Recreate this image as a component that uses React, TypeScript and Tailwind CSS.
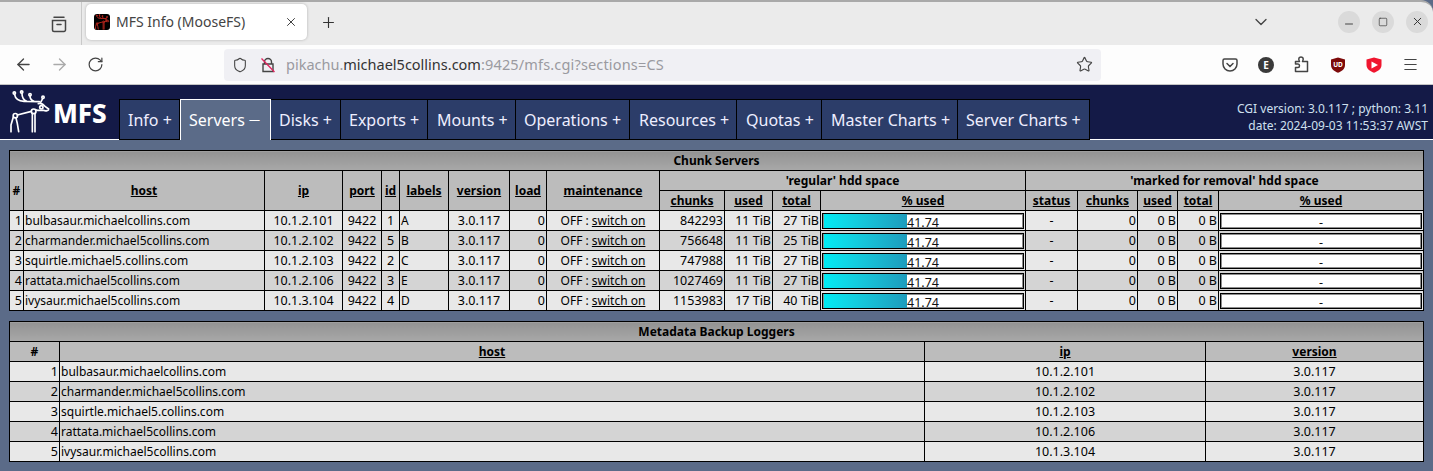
import React from "react";
import { ArrowLeft, ArrowRight, RotateCw, Shield, Star, Menu, X, Plus, ChevronDown, Minus, Square } from "lucide-react";

const tabs = [
  { label: "Info +", cls: "w-[61px] border-l pl-[8px]" },
  { label: "Servers", dash: true, cls: "w-[91px] pl-[8px]", active: true },
  { label: "Disks +", cls: "w-[70px] pl-[8px]" },
  { label: "Exports +", cls: "w-[87px] pl-[8px]" },
  { label: "Mounts +", cls: "w-[88px] pl-[9px]" },
  { label: "Operations +", cls: "w-[114px] pl-[8px]" },
  { label: "Resources +", cls: "w-[107px] pl-[9px]" },
  { label: "Quotas +", cls: "w-[85px] pl-[9px]" },
  { label: "Master Charts +", cls: "w-[136px] pl-[9px]" },
  { label: "Server Charts +", cls: "w-[132px] pl-[8px]" },
];

const servers = [
  ["bulbasaur.michaelcollins.com", "10.1.2.101", "1", "A", "842293", "11 TiB", "27 TiB"],
  ["charmander.michael5collins.com", "10.1.2.102", "5", "B", "756648", "11 TiB", "25 TiB"],
  ["squirtle.michael5.collins.com", "10.1.2.103", "2", "C", "747988", "11 TiB", "27 TiB"],
  ["rattata.michael5collins.com", "10.1.2.106", "3", "E", "1027469", "11 TiB", "27 TiB"],
  ["ivysaur.michael5collins.com", "10.1.3.104", "4", "D", "1153983", "17 TiB", "40 TiB"],
];

const th = "border border-black font-bold text-center p-0 bg-[#bcbcbc] h-[20px] leading-[19px] text-[12px]";
const td = "border border-black p-0 h-[20px] leading-[19px] font-normal";
const txt = "text-[12px]";
const cap = "border border-black font-bold text-center p-0 h-[20px] leading-[19px] text-[12px] bg-gradient-to-b from-[#939393] to-[#a8a8a8]";

function Link({ children }: { children: React.ReactNode }) {
  return <span className="underline">{children}</span>;
}

function Bar({ value, fill }: { value: string; fill?: boolean }) {
  return (
    <div className="relative mx-[1px] mt-[1px] h-[16px] border border-black bg-white shadow-[inset_0_0_0_1px_rgba(0,0,0,0.45)]">
      {fill && <div className="ml-[1px] h-full w-[41.74%] bg-gradient-to-r from-[#00ecf4] to-[#1d9cbd]" />}
      <div className="absolute inset-0 text-center text-[12.5px] leading-[17px] text-[#111]">{value}</div>
    </div>
  );
}

function Moose({ color = "white", width = 5 }: { color?: string; width?: number }) {
  return (
    <g fill="none" stroke={color} strokeWidth={width} strokeLinecap="round" strokeLinejoin="round">
      <path d="M44 25 C46 38 56 44 72 45 L118 46 M66 22 C66 32 70 40 80 45 M90 29 C90 36 94 42 102 45 M128 37 L122 48" />
      <circle cx="43" cy="20" r="3.5" />
      <circle cx="65" cy="17" r="3.5" />
      <circle cx="90" cy="25" r="3.5" />
      <circle cx="129" cy="33" r="3.5" />
      <path d="M115 52 C122 50 130 54 135 60 L146 68 C147 73 138 75 130 72 L112 72 L107 70" />
      <circle cx="124" cy="63" r="5" />
      <circle cx="101" cy="75" r="7" />
      <circle cx="46" cy="88" r="6.5" />
      <path d="M52 86 L94 75 M40 92 L33 116 L33 136 M48 95 L52 112 L56 136 M97 82 L97 136 M105 82 L105 136" />
    </g>
  );
}

export default function App() {
  return (
    <div className="h-[471px] w-[1433px] overflow-hidden bg-[#5b6b88] font-['Noto_Sans',sans-serif] text-[12.5px] text-black">
      {/* tab strip */}
      <div className="relative flex h-[45px] items-center rounded-tr-[12px] border-t-2 border-[#a9a9a9] bg-[#ebebeb] text-[#444]">
        <div className="ml-[50px] flex w-[31px] items-center">
          <svg width="18" height="18" viewBox="0 0 18 18" fill="none" stroke="#444" strokeWidth="1.5">
            <path d="M4 2.2h10M2.5 5.5h13v9.5a1.5 1.5 0 0 1-1.5 1.5H4A1.5 1.5 0 0 1 2.5 15zM7 9.5h4" strokeLinecap="round" />
          </svg>
        </div>
        <div className="h-[43px] w-px bg-[#c9c9c9]" />
        <div className="ml-[4px] mt-[-4px] flex h-[36px] w-[221px] items-center rounded-[5px] bg-white pl-[8px] pr-[9px] shadow-[0_0_3px_rgba(0,0,0,0.25)]">
          <svg width="16" height="16" viewBox="25 8 125 135" className="shrink-0 rounded-[3px] bg-black">
            <Moose color="#b5261e" width={8} />
          </svg>
          <span className="ml-[6px] flex-1 pt-[1px] text-[14px] leading-none text-[#444]">MFS Info (MooseFS)</span>
          <X size={14} strokeWidth={1.6} className="text-[#333]" />
        </div>
        <Plus size={17} strokeWidth={1.6} className="ml-[13px] mt-[-2px] text-[#333]" />
        <div className="flex-1" />
        <ChevronDown size={20} strokeWidth={1.6} className="mr-[67px] mt-[-4px] text-[#444]" />
        <div className="mr-[5px] mt-[-4px] flex items-center gap-[12px]">
          <div className="flex h-[22px] w-[22px] items-center justify-center rounded-full bg-[#dadada]">
            <Minus size={12} strokeWidth={1.8} className="mt-[5px] text-[#333]" />
          </div>
          <div className="flex h-[22px] w-[22px] items-center justify-center rounded-full bg-[#dadada]">
            <Square size={10} strokeWidth={1.6} className="text-[#333]" />
          </div>
          <div className="flex h-[22px] w-[22px] items-center justify-center rounded-full bg-[#dadada]">
            <X size={13} strokeWidth={1.8} className="text-[#333]" />
          </div>
        </div>
      </div>

      {/* toolbar */}
      <div className="flex h-[40px] items-center border-b border-[#c5c5c5] bg-[#fdfdfd] text-[#444]">
        <ArrowLeft size={19} strokeWidth={1.7} className="ml-[14px]" />
        <ArrowRight size={19} strokeWidth={1.7} className="ml-[17px] text-[#aaa]" />
        <RotateCw size={17} strokeWidth={1.7} className="ml-[18px]" />
        <div className="ml-[120px] flex h-[32px] w-[877px] items-center rounded-[4px] bg-[#f0f0f4] pl-[8px] pr-[8px]">
          <Shield size={16} strokeWidth={1.6} />
          <svg width="16" height="16" viewBox="0 0 16 16" fill="none" className="ml-[12px]">
            <path d="M4.5 7V5a3.5 3.5 0 0 1 7 0v2M3 7h10v7.5H3z" stroke="#444" strokeWidth="1.4" />
            <path d="M1.5 1.5 L14.5 15" stroke="#e0245e" strokeWidth="1.3" />
          </svg>
          <span className="ml-[10px] flex-1 text-[14.5px] leading-none text-[#9a9aa0]">
            pikachu.<span className="text-[#333]">michael5collins.com</span>
            <span className="tracking-[0.16px]">:9425/mfs.cgi?sections=CS</span>
          </span>
          <Star size={17} strokeWidth={1.6} />
        </div>
        <div className="ml-[121px] flex h-[16px] w-[16px] items-center justify-center">
          <svg width="16" height="16" viewBox="0 0 16 16" fill="none" stroke="#444" strokeWidth="1.5">
            <path d="M2.5 2h11A1.5 1.5 0 0 1 15 3.5V7a7 7 0 0 1-14 0V3.5A1.5 1.5 0 0 1 2.5 2z" />
            <path d="M5 6.5 L8 9.5 L11 6.5" strokeLinecap="round" />
          </svg>
        </div>
        <div className="ml-[20px] flex h-[16px] w-[16px] items-center justify-center rounded-full bg-[#3a3a3a] text-[10px] font-bold leading-none text-white">E</div>
        <svg width="16" height="17" viewBox="0 0 16 17" fill="none" stroke="#444" strokeWidth="1.5" strokeLinejoin="round" className="ml-[20px]">
          <path d="M1.5 15.5 V11.5 H4 C6 11.5 6 8 4 8 H1.5 V5.5 H5.5 C4 2.5 5 1 7 1 C9 1 10 2.5 8.5 5.5 H13.5 V15.5 Z" />
        </svg>
        <svg width="16" height="16" viewBox="0 0 16 16" className="ml-[20px]">
          <path d="M8 .5 L15 2.5 V8 C15 12 11.5 14.5 8 15.7 C4.5 14.5 1 12 1 8 V2.5 Z" fill="#7d0a0a" />
          <text x="8" y="10" fontSize="6.5" fontWeight="700" fill="#fff" textAnchor="middle">UD</text>
        </svg>
        <svg width="16" height="16" viewBox="0 0 16 16" className="ml-[20px]">
          <path d="M8 .5 L15.5 2.5 V8 C15.5 12 11.5 14.5 8 15.7 C4.5 14.5 .5 12 .5 8 V2.5 Z" fill="#f0162f" />
          <path d="M5.5 4.5 L12 8 L5.5 11.5 Z" fill="#fff" />
        </svg>
        <Menu size={17} strokeWidth={1.6} className="ml-[20px]" />
      </div>

      {/* MFS header */}
      <div className="flex h-[55px] items-start border-b border-white bg-[#141a47]">
        <div className="flex w-[119px] shrink-0 items-center pl-[10px] pt-[4px]">
          <svg width="40" height="44" viewBox="30 8 120 132" className="shrink-0">
            <Moose />
          </svg>
          <span className="ml-[3px] mt-[3px] text-[26px] font-extrabold leading-none text-white">MFS</span>
        </div>
        <div className="mt-[14px] flex h-[41px]">
          {tabs.map((t) => (
            <div
              key={t.label}
              className={
                t.active
                  ? `${t.cls} border border-b-0 border-white bg-[#5b6b88] text-[16px] leading-[41px] text-white`
                  : `${t.cls} border-y border-r border-black bg-[#2c3d69] text-[16px] leading-[41px] text-[#eef]`
              }
            >
              {t.label}
              {t.dash && (
                <>
                  {" "}
                  <span className="align-[3px] text-[11px] leading-none">—</span>
                </>
              )}
            </div>
          ))}
        </div>
        <div className="flex-1 pr-[5px] pt-[15px] text-right text-[12px] leading-[17px] text-[#cfe0ef]">
          <div>CGI version: 3.0.117 ; python: 3.11</div>
          <div>date: 2024-09-03 11:53:37 AWST</div>
        </div>
      </div>

      {/* tables */}
      <div className="pl-[9px] pt-[10px]">
        <table className="w-[1415px] table-fixed border-collapse">
          <colgroup>
            <col className="w-[14px]" /><col className="w-[241px]" /><col className="w-[78px]" /><col className="w-[39px]" />
            <col className="w-[18px]" /><col className="w-[49px]" /><col className="w-[61px]" /><col className="w-[37px]" />
            <col className="w-[113px]" /><col className="w-[65px]" /><col className="w-[48px]" /><col className="w-[48px]" />
            <col className="w-[205px]" /><col className="w-[52px]" /><col className="w-[60px]" /><col className="w-[40px]" />
            <col className="w-[41px]" /><col className="w-[205px]" />
          </colgroup>
          <thead>
            <tr><th colSpan={18} className={cap}>Chunk Servers</th></tr>
            <tr>
              <th rowSpan={2} className={th}>#</th>
              <th rowSpan={2} className={th}><Link>host</Link></th>
              <th rowSpan={2} className={th}><Link>ip</Link></th>
              <th rowSpan={2} className={th}><Link>port</Link></th>
              <th rowSpan={2} className={th}><Link>id</Link></th>
              <th rowSpan={2} className={th}><Link>labels</Link></th>
              <th rowSpan={2} className={th}><Link>version</Link></th>
              <th rowSpan={2} className={th}><Link>load</Link></th>
              <th rowSpan={2} className={th}><Link>maintenance</Link></th>
              <th colSpan={4} className={th}>'regular' hdd space</th>
              <th colSpan={5} className={th}>'marked for removal' hdd space</th>
            </tr>
            <tr>
              <th className={th}><Link>chunks</Link></th>
              <th className={th}><Link>used</Link></th>
              <th className={th}><Link>total</Link></th>
              <th className={th}><Link>% used</Link></th>
              <th className={th}><Link>status</Link></th>
              <th className={th}><Link>chunks</Link></th>
              <th className={th}><Link>used</Link></th>
              <th className={th}><Link>total</Link></th>
              <th className={th}><Link>% used</Link></th>
            </tr>
          </thead>
          <tbody>
            {servers.map((s, i) => (
              <tr key={s[0]} className={i % 2 === 0 ? "bg-[#e8e8e8]" : "bg-[#d4d4d4]"}>
                <td className={`${td} pr-[1px] text-right`}>{i + 1}</td>
                <td className={`${td} ${txt} pl-[1px]`}>{s[0]}</td>
                <td className={`${td} text-center`}>{s[1]}</td>
                <td className={`${td} text-center`}>9422</td>
                <td className={`${td} text-center`}>{s[2]}</td>
                <td className={`${td} ${txt} pl-[1px]`}>{s[3]}</td>
                <td className={`${td} text-center`}>3.0.117</td>
                <td className={`${td} pr-[1px] text-right`}>0</td>
                <td className={`${td} ${txt} text-center`}>OFF : <Link>switch on</Link></td>
                <td className={`${td} pr-[1px] text-right`}>{s[4]}</td>
                <td className={`${td} pr-[1px] text-right`}>{s[5]}</td>
                <td className={`${td} pr-[1px] text-right`}>{s[6]}</td>
                <td className={td}><Bar value="41.74" fill /></td>
                <td className={`${td} text-center`}>-</td>
                <td className={`${td} pr-[1px] text-right`}>0</td>
                <td className={`${td} pr-[1px] text-right`}>0 B</td>
                <td className={`${td} pr-[1px] text-right`}>0 B</td>
                <td className={td}><Bar value="-" /></td>
              </tr>
            ))}
          </tbody>
        </table>

        <table className="mt-[10px] w-[1415px] table-fixed border-collapse">
          <colgroup>
            <col className="w-[50px]" /><col className="w-[865px]" /><col className="w-[281px]" /><col className="w-[218px]" />
          </colgroup>
          <thead>
            <tr><th colSpan={4} className={cap}>Metadata Backup Loggers</th></tr>
            <tr>
              <th className={th}>#</th>
              <th className={th}><Link>host</Link></th>
              <th className={th}><Link>ip</Link></th>
              <th className={th}><Link>version</Link></th>
            </tr>
          </thead>
          <tbody>
            {servers.map((s, i) => (
              <tr key={s[0]} className={i % 2 === 0 ? "bg-[#e8e8e8]" : "bg-[#d4d4d4]"}>
                <td className={`${td} pr-[1px] text-right`}>{i + 1}</td>
                <td className={`${td} ${txt} pl-[1px]`}>{s[0]}</td>
                <td className={`${td} text-center`}>{s[1]}</td>
                <td className={`${td} text-center`}>3.0.117</td>
              </tr>
            ))}
          </tbody>
        </table>
      </div>
    </div>
  );
}
